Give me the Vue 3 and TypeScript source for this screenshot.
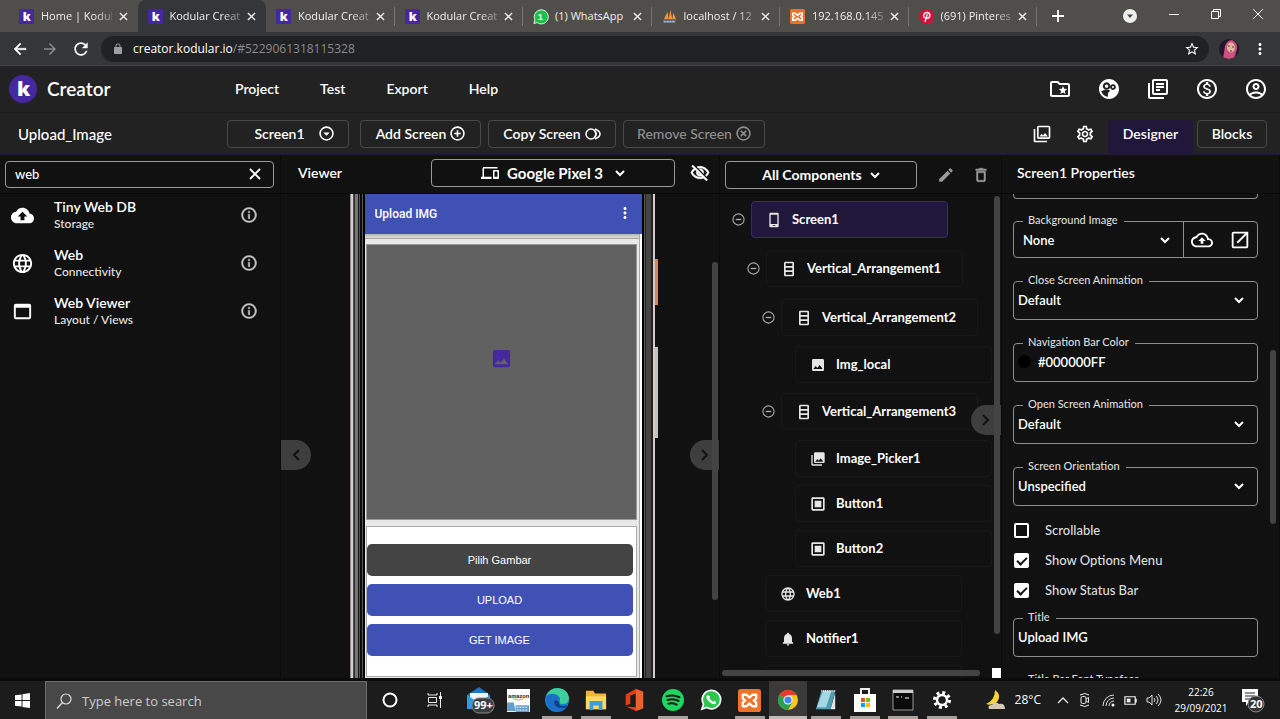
<script setup lang="ts">
import { ref } from 'vue'

interface Tab { title: string; icon: string; active?: boolean }
interface Component { name: string; category: string; icon: string }
interface TreeNode { name: string; icon: string; depth: string; parent?: boolean }
interface Field { id: string; label: string; value: string; kind: 'select' | 'color' | 'text' }

const icons: Record<string, string> = {
  folderStar: 'M20 6h-8l-2-2H4c-1.1 0-1.99.9-1.99 2L2 18c0 1.1.9 2 2 2h16c1.1 0 2-.9 2-2V8c0-1.1-.9-2-2-2zm0 12H4V6h5.17l2 2H20v10zm-6.92-3.96L12.39 17 15 15.47 17.61 17l-.69-2.96 2.3-1.99-3.03-.26L15 9l-1.19 2.79-3.03.26 2.3 1.99z',
  community: 'M11.99 2c-5.52 0-10 4.48-10 10s4.48 10 10 10 10-4.48 10-10-4.48-10-10-10zM9.600 5.300a3.800 3.800 0 1 0 .01 0zm0 2.100a1.700 1.700 0 1 1-.01 0zM16 7.200a2.900 2.900 0 1 0 .01 0zm0 1.900a1 1 0 1 1-.01 0zM4.200 14.200q2-1.500 5.400-1.500 2.400 0 3.800 1-2.500 1.300-2.500 3v3q-5-.6-6.700-5.500z',
  library: 'M4 6H2v14c0 1.1.9 2 2 2h14v-2H4V6zm16-4H8c-1.1 0-2 .9-2 2v12c0 1.1.9 2 2 2h12c1.1 0 2-.9 2-2V4c0-1.1-.9-2-2-2zm0 14H8V4h12v12zM10 9h8v2h-8zm0 3h4v2h-4zm0-6h8v2h-8z',
  money: 'M12 2C6.48 2 2 6.48 2 12s4.48 10 10 10 10-4.48 10-10S17.52 2 12 2zm0 18c-4.41 0-8-3.59-8-8s3.59-8 8-8 8 3.59 8 8-3.59 8-8 8zm.31-8.86c-1.77-.45-2.34-.94-2.34-1.67 0-.84.79-1.43 2.1-1.43 1.38 0 1.9.66 1.94 1.64h1.71c-.05-1.34-.87-2.57-2.49-2.97V5H10.9v1.69c-1.51.32-2.72 1.3-2.72 2.81 0 1.79 1.49 2.69 3.66 3.21 1.95.46 2.34 1.15 2.34 1.87 0 .53-.39 1.39-2.1 1.39-1.6 0-2.23-.72-2.32-1.64H8.04c.1 1.7 1.36 2.66 2.86 2.97V19h2.34v-1.67c1.52-.29 2.72-1.16 2.73-2.77-.01-2.2-1.9-2.96-3.66-3.42z',
  account: 'M12 2C6.48 2 2 6.48 2 12s4.48 10 10 10 10-4.48 10-10S17.52 2 12 2zM7.07 18.28c.43-.9 3.05-1.78 4.93-1.78s4.51.88 4.93 1.78C15.57 19.36 13.86 20 12 20s-3.57-.64-4.93-1.72zm11.29-1.45c-1.43-1.74-4.9-2.33-6.36-2.33s-4.93.59-6.36 2.33C4.62 15.49 4 13.82 4 12c0-4.41 3.59-8 8-8s8 3.59 8 8c0 1.82-.62 3.49-1.64 4.83zM12 6c-1.94 0-3.5 1.56-3.5 3.5S10.06 13 12 13s3.5-1.56 3.5-3.5S13.94 6 12 6zm0 5c-.83 0-1.5-.67-1.5-1.5S11.17 8 12 8s1.5.67 1.5 1.5S12.83 11 12 11z',
  assets: 'M20 4v12H8V4h12m0-2H8c-1.1 0-2 .9-2 2v12c0 1.1.9 2 2 2h12c1.1 0 2-.9 2-2V4c0-1.1-.9-2-2-2zm-8.5 9.67l1.69 2.26 2.48-3.1L19 15H9zM2 6v14c0 1.1.9 2 2 2h14v-2H4V6H2z',
  settings: 'M19.43 12.98c.04-.32.07-.64.07-.98 0-.34-.03-.66-.07-.98l2.11-1.65c.19-.15.24-.42.12-.64l-2-3.46c-.09-.16-.26-.25-.44-.25-.06 0-.12.01-.17.03l-2.49 1c-.52-.4-1.08-.73-1.69-.98l-.38-2.65C14.46 2.18 14.25 2 14 2h-4c-.25 0-.46.18-.49.42l-.38 2.65c-.61.25-1.17.59-1.69.98l-2.49-1c-.06-.02-.12-.03-.18-.03-.17 0-.34.09-.43.25l-2 3.46c-.13.22-.07.49.12.64l2.11 1.65c-.04.32-.07.65-.07.98 0 .33.03.66.07.98l-2.11 1.65c-.19.15-.24.42-.12.64l2 3.46c.09.16.26.25.44.25.06 0 .12-.01.17-.03l2.49-1c.52.4 1.08.73 1.69.98l.38 2.65c.03.24.24.42.49.42h4c.25 0 .46-.18.49-.42l.38-2.65c.61-.25 1.17-.59 1.69-.98l2.49 1c.06.02.12.03.18.03.17 0 .34-.09.43-.25l2-3.46c.12-.22.07-.49-.12-.64l-2.11-1.65zm-1.98-1.71c.04.31.05.52.05.73 0 .21-.02.43-.05.73l-.14 1.13.89.7 1.08.84-.7 1.21-1.27-.51-1.04-.42-.9.68c-.43.32-.84.56-1.25.73l-1.06.43-.16 1.13-.2 1.35h-1.4l-.19-1.35-.16-1.13-1.06-.43c-.43-.18-.83-.41-1.23-.71l-.91-.7-1.06.43-1.27.51-.7-1.21 1.08-.84.89-.7-.14-1.13c-.03-.31-.05-.54-.05-.74s.02-.43.05-.73l.14-1.13-.89-.7-1.08-.84.7-1.21 1.27.51 1.04.42.9-.68c.43-.32.84-.56 1.25-.73l1.06-.43.16-1.13.2-1.35h1.39l.19 1.35.16 1.13 1.06.43c.43.18.83.41 1.23.71l.91.7 1.06-.43 1.27-.51.7 1.21-1.07.85-.89.7.14 1.13zM12 8c-2.21 0-4 1.79-4 4s1.79 4 4 4 4-1.79 4-4-1.79-4-4-4zm0 6c-1.1 0-2-.9-2-2s.9-2 2-2 2 .9 2 2-.9 2-2 2z',
  edit: 'M3 17.25V21h3.75L17.81 9.94l-3.75-3.75L3 17.25zM20.71 7.04c.39-.39.39-1.02 0-1.41l-2.34-2.34c-.39-.39-1.02-.39-1.41 0l-1.83 1.83 3.75 3.75 1.83-1.83z',
  trash: 'M6 19c0 1.1.9 2 2 2h8c1.1 0 2-.9 2-2V7H6v12zM8 9h8v10H8V9zm7.5-5l-1-1h-5l-1 1H5v2h14V4z',
  cloud: 'M19.35 10.04C18.67 6.59 15.64 4 12 4 9.11 4 6.6 5.64 5.35 8.04 2.34 8.36 0 10.91 0 14c0 3.31 2.69 6 6 6h13c2.76 0 5-2.24 5-5 0-2.64-2.05-4.78-4.65-4.96zM14 13v4h-4v-4H7l5-5 5 5h-3z',
  cloudOutline: 'M19.35 10.04C18.67 6.59 15.64 4 12 4 9.11 4 6.61 5.64 5.36 8.04 2.35 8.36 0 10.9 0 14c0 3.31 2.69 6 6 6h13c2.76 0 5-2.24 5-5 0-2.64-2.05-4.78-4.65-4.96zM19 18H6c-2.21 0-4-1.79-4-4 0-2.05 1.53-3.76 3.56-3.97l1.07-.11.5-.95C8.08 7.14 9.94 6 12 6c2.62 0 4.88 1.86 5.39 4.43l.3 1.5 1.53.11c1.56.1 2.78 1.41 2.78 2.96 0 1.65-1.35 3-3 3zM8 13h2.55v3h2.9v-3H16l-4-4z',
  globe: 'M11.99 2C6.47 2 2 6.48 2 12s4.47 10 9.99 10C17.52 22 22 17.52 22 12S17.52 2 11.99 2zm6.93 6h-2.95c-.32-1.25-.78-2.45-1.38-3.56 1.84.63 3.37 1.91 4.33 3.56zM12 4.04c.83 1.2 1.48 2.53 1.91 3.96h-3.82c.43-1.43 1.08-2.76 1.91-3.96zM4.26 14C4.1 13.36 4 12.69 4 12s.1-1.36.26-2h3.38c-.08.66-.14 1.32-.14 2 0 .68.06 1.34.14 2H4.26zm.82 2h2.95c.32 1.25.78 2.45 1.38 3.56-1.84-.63-3.37-1.9-4.33-3.56zm2.95-8H5.08c.96-1.66 2.49-2.93 4.33-3.56C8.81 5.55 8.35 6.75 8.03 8zM12 19.96c-.83-1.2-1.48-2.53-1.91-3.96h3.82c-.43 1.43-1.08 2.76-1.91 3.96zM14.34 14H9.66c-.09-.66-.16-1.32-.16-2 0-.68.07-1.35.16-2h4.68c.09.65.16 1.32.16 2 0 .68-.07 1.34-.16 2zm.25 5.56c.6-1.11 1.06-2.31 1.38-3.56h2.95c-.96 1.65-2.49 2.93-4.33 3.56zM16.36 14c.08-.66.14-1.32.14-2 0-.68-.06-1.34-.14-2h3.38c.16.64.26 1.31.26 2s-.1 1.36-.26 2h-3.38z',
  webViewer: 'M19 4H5c-1.11 0-2 .9-2 2v12c0 1.1.89 2 2 2h14c1.1 0 2-.9 2-2V6c0-1.1-.9-2-2-2zm0 14H5V8h14v10z',
  info: 'M11 7h2v2h-2zm0 4h2v6h-2zm1-9C6.48 2 2 6.48 2 12s4.48 10 10 10 10-4.48 10-10S17.52 2 12 2zm0 18c-4.41 0-8-3.59-8-8s3.59-8 8-8 8 3.59 8 8-3.59 8-8 8z',
  image: 'M21 19V5c0-1.1-.9-2-2-2H5c-1.1 0-2 .9-2 2v14c0 1.1.9 2 2 2h14c1.1 0 2-.9 2-2zM8.5 13.5l2.5 3.01L14.5 12l4.5 6H5l3.5-4.5z',
  collections: 'M22 16V4c0-1.1-.9-2-2-2H8c-1.1 0-2 .9-2 2v12c0 1.1.9 2 2 2h12c1.1 0 2-.9 2-2zm-11-4l2.03 2.71L16 11l4 5H8l3-4zM2 6v14c0 1.1.9 2 2 2h14v-2H4V6H2z',
  bell: 'M12 22c1.1 0 2-.9 2-2h-4c0 1.1.89 2 2 2zm6-6v-5c0-3.07-1.64-5.64-4.5-6.32V4c0-.83-.67-1.5-1.5-1.5s-1.5.67-1.5 1.5v.68C7.63 5.36 6 7.92 6 11v5l-2 2v1h16v-1l-2-2z',
  phone: 'M17 1H7C5.9 1 5 1.9 5 3v18c0 1.1.9 2 2 2h10c1.1 0 2-.9 2-2V3c0-1.1-.9-2-2-2zm-3 20h-4v-1h4v1zm3-3H7V4h10v14z',
  vertical: 'M6.500 1h11c1 0 2 1 2 2v18c0 1-1 2-2 2h-11c-1 0-2-1-2-2V3c0-1 1-2 2-2zm.5 2.500v4h10v-4zm0 6.500v4h10v-4zm0 6.500v4h10v-4z',
  button: 'M4 2h16c1 0 2 1 2 2v16c0 1-1 2-2 2H4c-1 0-2-1-2-2V4c0-1 1-2 2-2zm.5 2.500v15h15v-15zM7 7h10v10H7z',
  devices: 'M4 6h18V4H4c-1.1 0-2 .9-2 2v11H0v3h14v-3H4V6zm19 2h-6c-.55 0-1 .45-1 1v10c0 .55.45 1 1 1h6c.55 0 1-.45 1-1V9c0-.55-.45-1-1-1zm-1 9h-4v-7h4v7z',
  hidden: 'M12 6c3.790 0 7.170 2.130 8.820 5.500-.59 1.220-1.420 2.270-2.410 3.120l1.410 1.410c1.390-1.230 2.490-2.770 3.180-4.530C21.270 7.110 17 4 12 4c-1.270 0-2.490.2-3.640.57l1.650 1.650C10.660 6.090 11.320 6 12 6zm-1.070 1.140L13 9.210c.57.25 1.030.71 1.280 1.280l2.070 2.070c.08-.34.14-.7.14-1.070C16.500 9.010 14.480 7 12 7c-.37 0-.72.05-1.070.14zM2.010 3.870l2.680 2.680C3.060 7.830 1.770 9.530 1 11.500 2.730 15.890 7 19 12 19c1.520 0 2.980-.29 4.320-.82l3.420 3.420 1.410-1.410L3.420 2.450 2.010 3.870zm7.500 7.500l2.610 2.610c-.04.01-.08.02-.12.02-1.380 0-2.500-1.120-2.500-2.500 0-.05.01-.08.01-.13zm-3.400-3.400l1.750 1.750c-.23.55-.36 1.150-.36 1.780 0 2.480 2.020 4.500 4.500 4.500.63 0 1.230-.13 1.770-.36l.98.98c-.88.24-1.800.38-2.750.38-3.790 0-7.170-2.130-8.820-5.500.7-1.430 1.720-2.610 2.930-3.530z',
  external: 'M14 3H5c-1.100 0-2 .9-2 2v14c0 1.100.9 2 2 2h14c1.100 0 2-.9 2-2v-9h-2v9H5V5h9zM14 3v2h3.590l-9.300 9.300 1.410 1.410L19 6.410V10h2V3h-7z',
  dots: 'M12 8c1.1 0 2-.9 2-2s-.9-2-2-2-2 .9-2 2 .9 2 2 2zm0 2c-1.1 0-2 .9-2 2s.9 2 2 2 2-.9 2-2-.9-2-2-2zm0 6c-1.1 0-2 .9-2 2s.9 2 2 2 2-.9 2-2-.9-2-2-2z',
  back: 'M20 11H7.830l5.590-5.590L12 4l-8 8 8 8 1.410-1.410L7.830 13H20v-2z',
  reload: 'M17.650 6.350C16.200 4.900 14.210 4 12 4c-4.420 0-7.990 3.580-7.990 8s3.570 8 7.990 8c3.730 0 6.840-2.550 7.730-6h-2.080c-.82 2.330-3.040 4-5.650 4-3.310 0-6-2.690-6-6s2.690-6 6-6c1.660 0 3.140.69 4.220 1.780L13 11h7V4l-2.350 2.350z',
  lock: 'M18 8h-1V6c0-2.760-2.240-5-5-5S7 3.240 7 6v2H6c-1.100 0-2 .9-2 2v10c0 1.100.9 2 2 2h12c1.100 0 2-.9 2-2V10c0-1.100-.9-2-2-2zM8.900 8V6c0-1.710 1.390-3.100 3.100-3.100s3.100 1.390 3.100 3.100v2z',
  star: 'M22 9.240l-7.190-.62L12 2 9.190 8.630 2 9.240l5.460 4.730L5.820 21 12 17.270 18.180 21l-1.630-7.030L22 9.240zM12 15.400l-3.760 2.270 1-4.280-3.320-2.880 4.380-.38L12 6.100l1.710 4.040 4.380.38-3.320 2.880 1 4.280L12 15.400z',
}

const tabs: Tab[] = [
  { title: 'Home | Kodul', icon: 'kodular' },
  { title: 'Kodular Creat', icon: 'kodular', active: true },
  { title: 'Kodular Creat', icon: 'kodular' },
  { title: 'Kodular Creat', icon: 'kodular' },
  { title: '(1) WhatsApp', icon: 'whatsapp' },
  { title: 'localhost / 12', icon: 'pma' },
  { title: '192.168.0.145', icon: 'xampp' },
  { title: '(691) Pinteres', icon: 'pinterest' },
]
const menu: string[] = ['Project', 'Test', 'Export', 'Help']
const headerIcons: string[] = ['folderStar', 'community', 'library', 'money', 'account']
const palette: Component[] = [
  { name: 'Tiny Web DB', category: 'Storage', icon: 'cloud' },
  { name: 'Web', category: 'Connectivity', icon: 'globe' },
  { name: 'Web Viewer', category: 'Layout / Views', icon: 'webViewer' },
]
const tree: TreeNode[] = [
  { name: 'Screen1', icon: 'phone', depth: 'd0', parent: true },
  { name: 'Vertical_Arrangement1', icon: 'vertical', depth: 'd1', parent: true },
  { name: 'Vertical_Arrangement2', icon: 'vertical', depth: 'd2', parent: true },
  { name: 'Img_local', icon: 'image', depth: 'd3' },
  { name: 'Vertical_Arrangement3', icon: 'vertical', depth: 'd2', parent: true },
  { name: 'Image_Picker1', icon: 'collections', depth: 'd3' },
  { name: 'Button1', icon: 'button', depth: 'd3' },
  { name: 'Button2', icon: 'button', depth: 'd3' },
  { name: 'Web1', icon: 'globe', depth: 'd1' },
  { name: 'Notifier1', icon: 'bell', depth: 'd1' },
]
const fields: Field[] = [
  { id: 'close-anim', label: 'Close Screen Animation', value: 'Default', kind: 'select' },
  { id: 'nav-color', label: 'Navigation Bar Color', value: '#000000FF', kind: 'color' },
  { id: 'open-anim', label: 'Open Screen Animation', value: 'Default', kind: 'select' },
  { id: 'orientation', label: 'Screen Orientation', value: 'Unspecified', kind: 'select' },
]
const checks = ref([
  { label: 'Scrollable', on: false },
  { label: 'Show Options Menu', on: true },
  { label: 'Show Status Bar', on: true },
])
const query = ref('web')
const title = ref('Upload IMG')
const selected = ref('Screen1')
const pinned: { name: string; open?: boolean; active?: boolean }[] = [
  { name: 'mail' }, { name: 'amazon' }, { name: 'edge', open: true }, { name: 'files', open: true },
  { name: 'office' }, { name: 'spotify', open: true }, { name: 'whatsapp' }, { name: 'xampp', open: true },
  { name: 'chrome', open: true, active: true }, { name: 'notepad', open: true }, { name: 'store', open: true },
  { name: 'terminal', open: true }, { name: 'gear', open: true },
]
</script>

<template>
  <div class="desktop">
    <div class="tabstrip">
      <div class="tabs">
        <div v-for="(t, i) in tabs" :key="i" class="tab" :class="{ active: t.active, plain: i === 0 }">
          <svg class="fav" viewBox="0 0 16 16" aria-hidden="true">
            <template v-if="t.icon === 'kodular'">
              <rect width="16" height="16" rx="1" fill="#4527a0" />
              <text x="4" y="13" class="k-small">k</text>
            </template>
            <template v-else-if="t.icon === 'whatsapp'">
              <path d="M1 15.500L2 11.500A7.500 7.500 0 1 1 4.500 14.500z" fill="#1fbf4b" stroke="#e8fbe9" />
              <text x="5" y="12" class="one">1</text>
            </template>
            <template v-else-if="t.icon === 'pma'">
              <path d="M2 11L6 3l1 8zM7 11L9 1l2 10zM11 11l1-7 3 7z" fill="#f29a2e" />
              <path d="M1 12h14l-1 3H2z" fill="#77778f" /><path d="M2 13.500h12" stroke="#c9c9d4" stroke-dasharray="2 1" />
            </template>
            <template v-else-if="t.icon === 'xampp'">
              <rect width="16" height="16" rx="2" fill="#e8722c" />
              <path d="M3 4.500h2.500L8 6.500l2.500-2H13v2.500l-1.500 1L13 9.500V12h-2.500L8 10l-2.500 2H3V9.500L4.500 8 3 7z" fill="none" stroke="#fff" stroke-width="1.800" />
            </template>
            <template v-else>
              <circle cx="8" cy="8" r="8" fill="#d5123c" />
              <path d="M5.500 9.300C3.600 5.600 6.500 3.400 9 3.700c3.600.5 3.200 6-.1 6.200-1 0-1.600-.6-1.600-.6M8.600 6L6.600 13" fill="none" stroke="#fff" stroke-width="1.500" stroke-linecap="round" />
            </template>
          </svg>
          <span class="tab-title">{{ t.title }}</span>
          <button class="bare" aria-label="Close tab"><svg class="x10" viewBox="0 0 10 10"><path d="M1 1l8 8M9 1L1 9" stroke="#eee" stroke-width="1.600" /></svg></button>
        </div>
      </div>
      <div class="window-ctl">
        <button class="bare new-tab" aria-label="New tab"><svg class="i12" viewBox="0 0 12 12"><path d="M6 0v12M0 6h12" stroke="#fff" stroke-width="1.800" /></svg></button>
        <button class="bare" aria-label="Search tabs"><svg class="i14" viewBox="0 0 14 14"><circle cx="7" cy="7" r="7" fill="#eee" /><path d="M4 5.500h6L7 9z" fill="#444" /></svg></button>
        <button class="bare lift" aria-label="Minimize"><svg class="i10" viewBox="0 0 10 10"><path d="M0 5.500h10" stroke="#fff" /></svg></button>
        <button class="bare lift" aria-label="Restore"><svg class="i10" viewBox="0 0 10 10"><path d="M.5 2.500h7v7h-7zM2.500 2.500v-2h7v7h-2" fill="none" stroke="#fff" /></svg></button>
        <button class="bare lift" aria-label="Close"><svg class="i10" viewBox="0 0 10 10"><path d="M0 0l10 10M10 0L0 10" stroke="#fff" /></svg></button>
      </div>
    </div>

    <div class="addressbar">
      <button class="bare" aria-label="Back"><svg class="i18" viewBox="0 0 24 24"><path :d="icons.back" class="bolder" /></svg></button>
      <button class="bare dim" aria-label="Forward"><svg class="i18" viewBox="0 0 24 24"><path :d="icons.back" transform="rotate(180 12 12)" /></svg></button>
      <button class="bare" aria-label="Reload"><svg class="i20" viewBox="0 0 24 24"><path :d="icons.reload" /></svg></button>
      <div class="url">
        <svg class="i12 lock" viewBox="0 0 24 24"><path :d="icons.lock" /></svg>
        <span class="url-text">creator.kodular.io<span class="dim">/#5229061318115328</span></span>
        <svg class="i16" viewBox="0 0 24 24"><path :d="icons.star" /></svg>
      </div>
      <svg class="avatar" viewBox="0 0 20 20" aria-hidden="true">
        <defs><clipPath id="face"><circle cx="10" cy="10" r="10" /></clipPath></defs>
        <g clip-path="url(#face)"><rect width="20" height="20" fill="#24162a" /><path d="M4 20L6 7q2-6 7-6 6 3 5 9l-3 10z" fill="#c9507f" /><ellipse cx="12" cy="8.500" rx="4" ry="5" fill="#e0b49c" /><path d="M9 7h2M13 8h2M11 12h2" stroke="#61363b" /></g>
      </svg>
      <button class="bare" aria-label="Browser menu"><svg class="i18" viewBox="0 0 24 24"><path :d="icons.dots" /></svg></button>
    </div>

    <header class="apphead">
      <div class="brand">
        <svg class="logo" viewBox="0 0 28 28" aria-hidden="true"><circle cx="14" cy="14" r="14" fill="#4527a0" /><text x="8" y="21" class="k-big">k</text></svg>
        <span>Creator</span>
      </div>
      <nav class="menu"><button v-for="m in menu" :key="m" class="bare">{{ m }}</button></nav>
      <div class="head-icons">
        <button v-for="n in headerIcons" :key="n" class="bare" :aria-label="n"><svg class="i24" viewBox="0 0 24 24"><path :d="icons[n]" fill-rule="evenodd" /></svg></button>
      </div>
    </header>

    <div class="screenbar">
      <span class="project">Upload_Image</span>
      <div class="screen-btns">
        <button class="outlined b1">Screen1 <svg class="i15" viewBox="0 0 14 14"><circle cx="7" cy="7" r="6" class="ring" /><path d="M4 6h6L7 9z" /></svg></button>
        <button class="outlined b2">Add Screen <svg class="i15" viewBox="0 0 14 14"><circle cx="7" cy="7" r="6" class="ring" /><path d="M7 4v6M4 7h6" class="ring" /></svg></button>
        <button class="outlined b3">Copy Screen <svg class="i16" viewBox="0 0 16 14"><circle cx="6" cy="7" r="5" class="ring" /><path d="M10 2q5 2 5 5t-5 5M10 4q2 3 0 6" class="ring" /></svg></button>
        <button class="outlined b4" disabled>Remove Screen <svg class="i15" viewBox="0 0 14 14"><circle cx="7" cy="7" r="6" class="ring" /><path d="M4.500 4.500l5 5M9.500 4.500l-5 5" class="ring" /></svg></button>
      </div>
      <div class="modes">
        <button class="bare" aria-label="Assets"><svg class="i20" viewBox="0 0 24 24"><path :d="icons.assets" /></svg></button>
        <button class="bare" aria-label="Settings"><svg class="i20" viewBox="0 0 24 24"><path :d="icons.settings" /></svg></button>
        <div class="mode-tabs"><button class="designer">Designer</button><button class="outlined blocks">Blocks</button></div>
      </div>
    </div>

    <main class="workspace">
      <section class="panel">
        <div class="bar search-bar">
          <div class="search"><input v-model="query" type="text" aria-label="Search components" /><button class="bare" aria-label="Clear" @click="query = ''"><svg class="i12" viewBox="0 0 12 12"><path d="M1 1l10 10M11 1L1 11" stroke="#fff" stroke-width="1.800" /></svg></button></div>
        </div>
        <ul class="palette">
          <li v-for="c in palette" :key="c.name">
            <svg class="i23" viewBox="0 0 24 24"><path :d="icons[c.icon]" /></svg>
            <div class="comp"><strong>{{ c.name }}</strong><span>{{ c.category }}</span></div>
            <button class="bare soft" :aria-label="'About ' + c.name"><svg class="i18" viewBox="0 0 24 24"><path :d="icons.info" class="bolder" /></svg></button>
          </li>
        </ul>
      </section>

      <section class="panel viewer">
        <div class="bar viewer-bar">
          <h2>Viewer</h2>
          <div class="picker device">
            <svg class="i18" viewBox="0 0 24 24"><path :d="icons.devices" /></svg>
            <select aria-label="Device"><option>Google Pixel 3</option></select>
            <svg class="chev" viewBox="0 0 10 6"><path d="M1 1l4 4 4-4" /></svg>
          </div>
          <button class="bare" aria-label="Hide components"><svg class="i20" viewBox="0 0 24 24"><path :d="icons.hidden" class="bolder" /></svg></button>
        </div>
        <div class="stage">
          <div class="phone">
            <i class="edge left"></i>
            <div class="screen">
              <div class="appbar"><span>Upload IMG</span><button class="bare" aria-label="Options"><svg class="i18" viewBox="0 0 24 24"><path :d="icons.dots" /></svg></button></div>
              <div class="outer">
                <div class="picture"><svg class="i23" viewBox="0 0 24 24"><path :d="icons.image" /></svg></div>
                <div class="actions">
                  <button class="dark">Pilih Gambar</button>
                  <button>UPLOAD</button>
                  <button>GET IMAGE</button>
                </div>
              </div>
            </div>
            <i class="edge right"></i>
            <i class="side power"></i><i class="side volume"></i>
          </div>
          <i class="thumb viewer-thumb"></i>
          <button class="handle h-left" aria-label="Collapse palette"><svg viewBox="0 0 8 12"><path d="M7 1L2 6l5 5" /></svg></button>
          <button class="handle h-right" aria-label="Collapse tree"><svg viewBox="0 0 8 12"><path d="M1 1l5 5-5 5" /></svg></button>
        </div>
      </section>

      <section class="panel">
        <div class="bar tree-bar">
          <div class="picker">
            <select aria-label="Component filter"><option>All Components</option></select>
            <svg class="chev" viewBox="0 0 10 6"><path d="M1 1l4 4 4-4" /></svg>
          </div>
          <button class="bare gray" aria-label="Rename"><svg class="i18" viewBox="0 0 24 24"><path :d="icons.edit" /></svg></button>
          <button class="bare gray" aria-label="Delete"><svg class="i18" viewBox="0 0 24 24"><path :d="icons.trash" class="bolder" /></svg></button>
        </div>
        <div class="tree">
          <div v-for="n in tree" :key="n.name" class="node" :class="[n.depth, { parent: n.parent }]">
            <button v-if="n.parent" class="bare toggle" aria-label="Collapse"><svg class="i13" viewBox="0 0 14 14"><circle cx="7" cy="7" r="6" class="ring thin" /><path d="M4 7h6" class="ring" /></svg></button>
            <button class="node-box" :class="{ selected: selected === n.name }" @click="selected = n.name"><svg class="i16" viewBox="0 0 24 24"><path :d="icons[n.icon]" /></svg><span>{{ n.name }}</span></button>
          </div>
          <div class="node d1"><span class="node-box"></span></div>
          <i class="thumb tree-thumb"></i><i class="thumb tree-hthumb"></i><i class="corner"></i>
          <button class="handle h-tree" aria-label="Collapse properties"><svg viewBox="0 0 8 12"><path d="M1 1l5 5-5 5" /></svg></button>
        </div>
      </section>

      <section class="panel">
        <div class="bar props-bar"><h2>Screen1 Properties</h2></div>
        <div class="props">
          <div class="field-end"></div>
          <fieldset class="field bg">
            <legend><label for="bg-image">Background Image</label></legend>
            <div class="bg-row">
              <select id="bg-image"><option>None</option></select>
              <svg class="chev" viewBox="0 0 10 6"><path d="M1 1l4 4 4-4" /></svg>
              <div class="bg-btns">
                <button class="bare" aria-label="Upload"><svg class="i22" viewBox="0 0 24 24"><path :d="icons.cloudOutline" /></svg></button>
                <button class="bare" aria-label="Open"><svg class="i22" viewBox="0 0 24 24"><path :d="icons.external" /></svg></button>
              </div>
            </div>
          </fieldset>
          <fieldset v-for="f in fields" :key="f.id" class="field">
            <legend><label :for="f.id">{{ f.label }}</label></legend>
            <div class="value">
              <template v-if="f.kind === 'select'">
                <select :id="f.id"><option>{{ f.value }}</option></select>
                <svg class="chev" viewBox="0 0 10 6"><path d="M1 1l4 4 4-4" /></svg>
              </template>
              <template v-else><i class="swatch"></i><input :id="f.id" type="text" :value="f.value" /></template>
            </div>
          </fieldset>
          <div class="checks">
            <label v-for="c in checks" :key="c.label"><input v-model="c.on" type="checkbox" />{{ c.label }}</label>
          </div>
          <fieldset class="field">
            <legend><label for="title">Title</label></legend>
            <div class="value"><input id="title" v-model="title" type="text" /></div>
          </fieldset>
          <fieldset class="field">
            <legend><label for="typeface">Title Bar Font Typeface</label></legend>
            <div class="value"><select id="typeface"><option>Default</option></select></div>
          </fieldset>
          <i class="thumb props-thumb"></i>
        </div>
      </section>
    </main>

    <footer class="taskbar">
      <button class="start" aria-label="Start"><svg class="i15" viewBox="0 0 16 16"><path d="M0 2.500L7 1.500v6H0zM8 1.300L16 0v7.500H8zM0 8.500h7v6l-7-1zM8 8.500h8V16l-8-1.200z" /></svg></button>
      <div class="wsearch">
        <svg class="i18" viewBox="0 0 18 18"><circle cx="11" cy="7" r="5" fill="none" stroke="#ddd" stroke-width="1.200" /><path d="M7.500 10.500L2 16.500" stroke="#ddd" stroke-width="1.300" /></svg>
        <input type="text" placeholder="Type here to search" aria-label="Type here to search" />
      </div>
      <button class="cortana" aria-label="Cortana"><svg class="i16" viewBox="0 0 16 16"><circle cx="8" cy="8" r="6.500" fill="none" stroke="#fff" stroke-width="2" /></svg></button>
      <button class="cortana" aria-label="Task view"><svg class="i16" viewBox="0 0 16 16"><path d="M1 1v2h9V1M1 15v-2h9v2M1.500 5.500h8v5h-8zM13.500 0v16" fill="none" stroke="#eee" /><rect x="12" y="4" width="3" height="3" fill="#eee" /></svg></button>
      <div class="pinned">
        <button v-for="p in pinned" :key="p.name" class="app" :class="{ open: p.open, current: p.active }" :aria-label="p.name">
          <svg v-if="p.name === 'mail'" class="i30" viewBox="0 0 30 30"><path d="M2 10L14 2l11 8v14H2z" fill="#1976c4" /><path d="M5 8h18v8H5z" fill="#f4f4f4" /><path d="M2 10l12 8 11-8v14H2z" fill="#2f9be6" /><rect x="7" y="13" width="22" height="15" rx="7" fill="#3a3d42" stroke="#888" /><text x="9" y="24" class="badge">99+</text></svg>
          <svg v-else-if="p.name === 'amazon'" class="i23" viewBox="0 0 24 24"><rect width="24" height="24" fill="#fff" /><text x="1" y="9" class="amz">amazon</text><path d="M6 10q6 3 12 0" fill="none" stroke="#f79a1d" /><path d="M0 14h7l2 9H0zM9 17h14v7H9z" fill="#5f9fd0" /><path d="M10 19h12M10 22h12" stroke="#fff" stroke-dasharray="2 1" /></svg>
          <svg v-else-if="p.name === 'edge'" class="i24" viewBox="0 0 24 24"><circle cx="12" cy="12" r="12" fill="#1682d8" /><path d="M1 9Q4 0 13 0q10 1 11 10 0 6-7 6-3 0-2-3Q15 6 8 6q-5 0-7 3z" fill="#3fcf98" /><path d="M1 9q3-4 8-3 6 2 6 6-4-1-5 3 1 6 11 5-5 5-12 3Q1 20 1 9z" fill="#1c6fc9" /><path d="M9 13q-1 8 12 7l1-3q-8 3-8-3-3-3-5-1z" fill="#103f88" /></svg>
          <svg v-else-if="p.name === 'files'" class="i22" viewBox="0 0 24 24"><path d="M1 2h8l2 3h12v17H1z" fill="#f2b632" /><path d="M1 8h22v14H1z" fill="#ffd768" /><path d="M5 13h14v10h-4v-5H9v5H5z" fill="#3f9be0" /></svg>
          <svg v-else-if="p.name === 'office'" class="i22" viewBox="0 0 24 24"><path d="M14 0l8 3v18l-8 3-11-5 11 1V5L8 7v9l-5 2V6z" fill="#e43e18" /><path d="M14 0l8 3v18l-8 3z" fill="#f0602c" /></svg>
          <svg v-else-if="p.name === 'spotify'" class="i22" viewBox="0 0 24 24"><circle cx="12" cy="12" r="12" fill="#1ed760" /><path d="M5 8q8-2 14 1M6 12q7-2 12 1M7 16q5-1 9 1" fill="none" stroke="#181818" stroke-width="2.200" stroke-linecap="round" /></svg>
          <svg v-else-if="p.name === 'whatsapp'" class="i20" viewBox="0 0 24 24"><path d="M1 23l2-6A11 11 0 1 1 7 21z" fill="#2cc64d" stroke="#fff" stroke-width="2" /><path d="M8 6q-4 3 2 8t8 2l-1-3-3 1-4-4 1-2z" fill="#fff" /></svg>
          <svg v-else-if="p.name === 'xampp'" class="i23" viewBox="0 0 24 24"><rect width="24" height="24" rx="3" fill="#f0732b" /><path d="M5 6h4l3 3 3-3h4v4l-2.500 2L19 14v4h-4l-3-3-3 3H5v-4l2.500-2L5 10z" fill="none" stroke="#fff" stroke-width="2.400" stroke-linejoin="round" /></svg>
          <svg v-else-if="p.name === 'chrome'" class="i20" viewBox="0 0 24 24"><circle cx="12" cy="12" r="12" fill="#f9c620" /><path d="M12 12L1.600 6A12 12 0 0 1 22.400 6H12z" fill="#e33b2e" /><path d="M12 12l5 3-5 9A12 12 0 0 1 1.600 6z" fill="#2da04e" /><circle cx="12" cy="12" r="5.500" fill="#fff" /><circle cx="12" cy="12" r="4.300" fill="#4285f4" /></svg>
          <svg v-else-if="p.name === 'notepad'" class="i22" viewBox="0 0 24 24"><path d="M7 2h15l-5 20H1z" fill="#4f9fb2" /><path d="M9 2h9L12 20H2z" fill="#a5d8e2" /><path d="M22 4v18h-5z" fill="#dfe6e8" /><path d="M7 2h15" stroke="#eee" stroke-width="2" stroke-dasharray="1 1" /></svg>
          <svg v-else-if="p.name === 'store'" class="i26" viewBox="0 0 26 26"><path d="M9 7V2h8v5" fill="none" stroke="#eee" stroke-width="2" /><path d="M2 7h22v18H2z" fill="#fff" /><path d="M9 11h4v4H9z" fill="#f25022" /><path d="M14 11h4v4h-4z" fill="#7fba00" /><path d="M9 16h4v4H9z" fill="#00a4ef" /><path d="M14 16h4v4h-4z" fill="#ffb900" /></svg>
          <svg v-else-if="p.name === 'terminal'" class="i20" viewBox="0 0 20 20"><path d="M0 0h20v20H0z" fill="#0a0a0a" stroke="#999" /><path d="M0 0h20v3H0z" fill="#ccc" /><path d="M3 7h3M8 7h1M12 8h4" stroke="#fff" /></svg>
          <svg v-else class="i18" viewBox="0 0 18 18"><circle cx="9" cy="9" r="7.500" fill="none" stroke="#fff" stroke-width="3" stroke-dasharray="3 2.900" /><circle cx="9" cy="9" r="5" fill="none" stroke="#fff" stroke-width="2.500" /></svg>
        </button>
      </div>
      <div class="tray">
        <svg class="i22" viewBox="0 0 22 22"><path d="M10 1q7 5 2 12-5 4-11 2 9-4 9-14z" fill="#f8d534" /><path d="M4 20q-2-4 3-4 3-5 7-1 6-1 6 5z" fill="#d5c7b4" /></svg>
        <span class="temp">28°C</span>
        <svg class="i12" viewBox="0 0 12 12"><path d="M1 9l5-5 5 5" fill="none" stroke="#eee" stroke-width="1.300" /></svg>
        <svg class="i16" viewBox="0 0 16 16"><rect x="4" y="4.500" width="5" height="7" rx="1.500" fill="none" stroke="#eee" /><path d="M9 7l2.500-1.500v5L9 9M3 3q5-3 9 0M3 13q5 3 9 0" fill="none" stroke="#eee" /></svg>
        <svg class="i14" viewBox="0 0 14 14"><path d="M2 13A11 11 0 0 1 13 2M5 13a8 8 0 0 1 8-8M8 13a5 5 0 0 1 5-5" fill="none" stroke="#ddd" /><circle cx="12" cy="12" r="1.500" fill="#fff" /></svg>
        <svg class="i15" viewBox="0 0 16 12"><path d="M2 2h11v8H2zM14 4v4" fill="none" stroke="#eee" stroke-width="1.300" /><path d="M4 4h4v4H4z" fill="#eee" /></svg>
        <svg class="i16" viewBox="0 0 16 14"><path d="M1 5h2l3-3v10L3 9H1zM8 5q2 2 0 4M10 3q4 4 0 8M12 1q6 6 0 12" fill="none" stroke="#ddd" /></svg>
        <div class="clock"><span>22:26</span><span>29/09/2021</span></div>
        <svg class="note" viewBox="0 0 26 26"><path d="M2 2h16v13H9l-3 4v-4H2z" fill="#fff" /><path d="M5 6h10M5 9h10M5 12h6" stroke="#222" /><circle cx="16" cy="17" r="8" fill="#333" stroke="#888" /><text x="10" y="21" class="badge">20</text></svg>
      </div>
    </footer>
  </div>
</template>

<style>
html, body { margin: 0; background: #000; }
</style>

<style scoped>
* { box-sizing: border-box; }
.desktop { height: 100vh; min-height: 600px; display: flex; flex-direction: column; overflow: hidden; background: #111; color: #fff; font: 500 14px/18px Lato, "Open Sans", sans-serif; }
button, input, select { font: inherit; color: inherit; margin: 0; padding: 0; border: 0; background: none; border-radius: 0; outline: none; }
svg { display: block; flex: none; fill: currentColor; overflow: visible; }
h2 { margin: 0; font: inherit; font-weight: 600; }
select { appearance: none; }
option { background: #222; }
.bare { display: flex; align-items: center; justify-content: center; }
.dim { color: #898b8f; }
.gray { color: #9a9a9a; }
.soft { color: #c4c4c4; }
.i10 { width: 10px; height: 10px; } .i12 { width: 12px; height: 12px; } .i13 { width: 13px; height: 13px; }
.i14 { width: 14px; height: 14px; } .i15 { width: 15px; height: 15px; } .i16 { width: 16px; height: 16px; }
.i18 { width: 18px; height: 18px; } .i20 { width: 20px; height: 20px; } .i22 { width: 22px; height: 22px; }
.i23 { width: 23px; height: 23px; } .i24 { width: 24px; height: 24px; } .i26 { width: 26px; height: 26px; }
.i30 { width: 30px; height: 30px; } .x10 { width: 9px; height: 9px; }
.ring { fill: none; stroke: currentColor; stroke-width: 1.5; }
.ring.thin { stroke-width: 1.2; }
.bolder { stroke: currentColor; stroke-width: 0.6; }
.chev { width: 10px; height: 6px; fill: none; stroke: #fff; stroke-width: 2; pointer-events: none; }

.tabstrip { flex: none; height: 32px; display: flex; padding-left: 9px; background: #504e4a; font: 12px/16px "Open Sans", "Noto Sans", sans-serif; }
.tabs { flex: 1; display: flex; min-width: 0; }
.tab { flex: 1; min-width: 0; display: flex; align-items: center; gap: 7px; padding: 0 10px; border-radius: 8px 8px 0 0; background: linear-gradient(#777673, #777673) right center / 1px 19px no-repeat; color: #eee; }
.tab.plain { background: none; }
.tab.active { background: #35363a; }
.fav { width: 15px; height: 15px; }
.tab-title { flex: 1; min-width: 0; white-space: nowrap; font-size: 11px; -webkit-mask-image: linear-gradient(90deg, #000 75%, #0005); mask-image: linear-gradient(90deg, #000 75%, #0005); }
.tab:nth-child(5) .tab-title { -webkit-mask-image: none; mask-image: none; }
.k-small { font: 800 13px "Open Sans", sans-serif; fill: #fff; }
.k-big { font: 800 20px "Open Sans", sans-serif; fill: #fff; }
.one { font: 700 10px "Liberation Sans", sans-serif; fill: #fff; }
.window-ctl { flex: none; width: 243px; display: flex; align-items: center; gap: 32px; padding: 0 17px 0 15px; }
.new-tab { margin-right: auto; }
.lift { padding-bottom: 5px; }

.addressbar { flex: none; height: 34px; display: flex; align-items: center; gap: 12px; padding: 0 11px; background: #35363a; border-bottom: 1px solid #43444a; }
.url { flex: 1; height: 26px; display: flex; align-items: center; gap: 9px; margin: 0 -2px; padding: 0 9px 0 11px; border-radius: 13px; background: #202124; font: 12px/16px "Open Sans", "Noto Sans", sans-serif; }
.url-text { flex: 1; }
.lock { color: #9aa0a6; }
.avatar { width: 20px; height: 20px; }

.apphead { flex: none; height: 47px; display: flex; align-items: center; padding: 0 12px 0 9px; background: #222; border-bottom: 1px solid #1a1a1a; }
.brand { width: 226px; display: flex; align-items: center; gap: 10px; font-size: 19px; font-weight: 600; line-height: 24px; }
.logo { width: 28px; height: 28px; }
.menu { display: flex; gap: 41px; font-weight: 600; }
.head-icons { margin-left: auto; display: flex; gap: 25px; }

.screenbar { flex: none; height: 42px; display: flex; align-items: center; padding-right: 13px; background: #222; border-bottom: 1px solid #20173a; font-weight: 600; }
.project { width: 227px; padding-left: 18px; font-size: 15px; font-weight: 500; }
.screen-btns { display: flex; gap: 7px; }
.outlined { height: 28px; display: flex; align-items: center; justify-content: center; gap: 4px; padding: 0; border: 1px solid #4a4a4a; border-radius: 4px; white-space: nowrap; }
.b1 { width: 122px; gap: 14px; margin-right: 4px; padding: 0 0 0 12px; }
.b2 { width: 121px; } .b3 { width: 128px; } .b4 { width: 142px; color: #8e8e8e; font-weight: 500; }
.modes { margin-left: auto; align-self: stretch; display: flex; align-items: center; gap: 23px; }
.mode-tabs { display: flex; align-items: center; gap: 4px; align-self: stretch; margin-left: -10px; }
.designer { width: 85px; align-self: stretch; margin-top: 7px; padding-bottom: 6px; border-radius: 4px 4px 0 0; background: #20173a; }
.blocks { width: 70px; }

.workspace { flex: 1; min-height: 0; display: grid; grid-template-columns: 281px minmax(0, 1fr) 282px 278px; border-bottom: 3px solid #0a0a0a; }
.panel { min-width: 0; min-height: 0; display: flex; flex-direction: column; border-right: 1px solid #0a0a0a; }
.bar { flex: none; height: 39px; display: flex; align-items: center; border-bottom: 1px solid #080808; }
.search-bar { padding: 0 6px 0 5px; }
.search { flex: 1; height: 27px; display: flex; align-items: center; padding: 0 12px 0 9px; border: 1px solid #999; border-radius: 4px; }
.search input { flex: 1; min-width: 0; font-size: 13px; }
.palette { list-style: none; margin: 0; padding: 0; }
.palette li { height: 48px; display: flex; align-items: center; padding: 0 22px 6px 11px; }
.comp { flex: 1; margin-left: 20px; padding-bottom: 1px; display: flex; flex-direction: column; line-height: 17px; }
.comp strong { font-size: 14px; font-weight: 600; }
.comp span { font-size: 12px; color: #e4e4e4; }

.viewer-bar { padding: 0 9px 2px 17px; }
.picker { height: 28px; display: flex; align-items: center; justify-content: center; gap: 8px; border: 1px solid #999; border-radius: 4px; font-size: 14px; font-weight: 700; }
.picker select { field-sizing: content; }
.device { width: 244px; margin: 0 15px 0 auto; font-size: 15px; }
.device .chev { margin-left: 4px; }
.stage { position: relative; flex: 1; min-height: 0; overflow: hidden; display: flex; justify-content: center; }
.phone { position: relative; width: 305px; height: 100%; display: flex; margin-left: 4px; }
.edge { flex: none; }
.left { width: 15px; background: linear-gradient(90deg, #8d8583 0 1px, #dacfce 1px 3px, #4c4c4c 3px 4px, #2c2c2c 4px 5px, #777 5px 8px, #151515 8px 9px, #555 9px 10px, #0c0c0c 10px 12px, #5a5a5a 12px 13px, #000 13px); }
.right { width: 13px; background: linear-gradient(90deg, #000 0 2px, #555 2px 3px, #282828 3px 4px, #444442 4px 9px, #222 9px 11px, #d5cbc9 11px); }
.side { position: absolute; left: 305px; width: 3px; }
.power { top: 65px; height: 46px; background: #e1834f; }
.volume { top: 153px; height: 91px; background: #c8c0be; }
.screen { flex: 1; display: flex; flex-direction: column; background: #fff; font-family: Roboto, "Liberation Sans", sans-serif; }
.appbar { flex: none; height: 40px; display: flex; align-items: center; justify-content: space-between; padding: 0 8px 0 10px; background: #3f51b5; font-size: 12px; font-weight: 500; }
.appbar svg { margin-bottom: 3px; }
.outer { flex: 1; min-height: 0; display: flex; flex-direction: column; gap: 6px; margin-right: 2px; padding: 10px 2px 1px 1px; border-right: 1px solid #aaa; background: linear-gradient(#b5b5b5, #dedede 4px, #a9a0a0 4px 5px, #e8e8e8 5px); }
.picture { flex: none; height: 276px; display: flex; align-items: center; justify-content: center; padding-bottom: 48px; border: 1px solid #999; background: #616161; color: #4527a0; }
.actions { flex: 1; display: flex; flex-direction: column; gap: 8px; padding: 17px 3px 0 0; border: 1px solid #aaa; background: #fff; }
.actions button { flex: none; height: 32px; border-radius: 5px; background: #3f51b5; font: 11px/16px "Liberation Sans", sans-serif; }
.actions .dark { background: #444; }
.thumb { position: absolute; width: 6px; border-radius: 3px; background: #434343; }
.viewer-thumb { right: 1px; top: 68px; height: 338px; }
.handle { position: absolute; width: 30px; height: 30px; display: flex; align-items: center; justify-content: center; background: #444444e0; }
.handle svg { width: 8px; height: 12px; fill: none; stroke: #111; stroke-width: 2; }
.h-left { left: 0; top: 246px; border-radius: 0 15px 15px 0; }
.h-right { right: -1px; top: 246px; border-radius: 15px 0 0 15px; }

.tree-bar { gap: 17px; padding: 1px 11px 0 5px; }
.tree-bar .picker { width: 192px; margin-right: 3px; }
.tree { position: relative; flex: 1; min-height: 0; overflow: hidden; padding: 1px 0 0; }
.node { height: 45px; display: flex; align-items: center; font-size: 13px; font-weight: 700; }
.node.parent { height: 49px; }
.d0 { padding-left: 31px; } .d1 { padding-left: 46px; } .d2 { padding-left: 61px; } .d3 { padding-left: 75px; }
.d1:not(.parent) { padding-left: 45px; }
.toggle { margin-left: -19px; margin-right: 6px; color: #aaa; }
.node-box { flex: none; width: 197px; height: 37px; display: flex; align-items: center; gap: 10px; padding-left: 14px; border: 1px solid #181818; border-radius: 4px; }
.node-box span { padding-bottom: 2px; }
.node-box svg { color: #e6e6e6; }
.selected { border-color: #3a2a72; background: #20173a; }
.tree-thumb { right: 1px; top: 2px; height: 438px; }
.tree-hthumb { left: 2px; bottom: 2px; width: 258px; height: 6px; }
.corner { position: absolute; right: 0; bottom: 0; width: 9px; height: 10px; background: #fff; }
.h-tree { right: 0; top: 211px; border-radius: 15px 0 0 15px; }

.props-bar { padding: 0 14px 2px 15px; }
.props { position: relative; flex: 1; min-height: 0; overflow: hidden; padding: 0 21px 0 11px; }
.field-end { height: 5px; margin-bottom: 15px; border: 1px solid #8d8d8d; border-top: 0; border-radius: 0 0 4px 4px; }
.field { min-width: 0; height: 46px; margin: 0 0 16px; padding: 0; border: 1px solid #8d8d8d; border-radius: 4px; }
.field.bg { height: 44px; }
.field legend { margin-left: 9px; padding: 0 6px 2px 5px; font-size: 11px; line-height: 12px; color: #ddd; }
.value { height: 23px; display: flex; align-items: center; padding: 0 13px 0 4px; font-size: 13px; }
.value, .bg-row { font-weight: 600; }
.value select, .value input { flex: 1; min-width: 0; }
.swatch { width: 13px; height: 13px; margin-right: 7px; border-radius: 50%; background: #000; }
.bg-row { height: 24px; display: flex; align-items: center; font-size: 13px; }
.bg-row select { flex: 1; padding: 0 0 0 9px; }
.bg-btns { height: 36px; width: 74px; display: flex; align-items: center; justify-content: space-between; margin: -2px 0 0 13px; padding: 1px 6px 0 7px; border-left: 1px solid #8d8d8d; }
.checks { margin-top: -7px; margin-bottom: 6px; }
.checks label { height: 30px; display: flex; align-items: center; gap: 16px; padding-left: 1px; color: #ddd; font-size: 13px; }
.checks input { appearance: none; width: 15px; height: 15px; display: flex; justify-content: center; border: 2px solid #fff; border-radius: 2px; }
.checks input:checked { background: #fff; }
.checks input:checked::after { content: ""; width: 4px; height: 8px; border: solid #111; border-width: 0 2px 2px 0; transform: rotate(45deg); }
.props-thumb { right: 3px; top: 156px; height: 174px; }

.taskbar { flex: none; height: 38px; display: flex; align-items: stretch; background: #1c1c1c; font: 12px/16px "Open Sans", "Noto Sans", sans-serif; }
.start { width: 45px; display: flex; align-items: center; justify-content: center; }
.wsearch { width: 322px; display: flex; align-items: center; gap: 9px; padding-left: 9px; border: 1px solid #6d6d6d; border-bottom: 0; background: #484848; }
.wsearch input { flex: 1; min-width: 0; font-size: 13px; }
.wsearch input::placeholder { color: #ccc; opacity: 1; }
.cortana { width: 45px; display: flex; align-items: center; justify-content: center; }
.pinned { width: 500px; margin-left: 4px; display: flex; }
.app { flex: 1; display: flex; align-items: center; justify-content: center; }
.app.open { background: linear-gradient(#a9a19b, #a9a19b) center bottom / 30px 3px no-repeat; }
.app.current { background: linear-gradient(#c3bcb6, #c3bcb6) center bottom / 38px 3px no-repeat #3b3a39; }
.badge { font: 700 11px "Open Sans", sans-serif; fill: #fff; }
.amz { font: 700 6px "Liberation Sans", sans-serif; fill: #222; }
.tray { flex: 1; display: flex; align-items: center; justify-content: flex-end; gap: 8px; padding-right: 14px; }
.temp { margin-right: 8px; }
.clock { width: 62px; display: flex; flex-direction: column; align-items: center; font-size: 10px; }
.note { width: 26px; height: 26px; }
</style>
